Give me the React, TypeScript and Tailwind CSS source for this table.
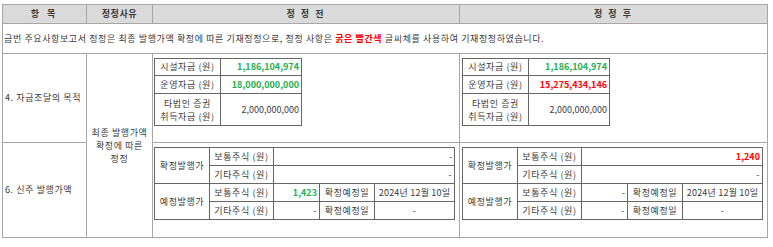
import React from 'react';

const font = { fontFamily: '"Noto Sans CJK KR", "Noto Sans", sans-serif' };

const FundTable: React.FC<{ running: string; runningRed?: boolean }> = ({ running, runningRed }) => (
  <table className="w-[148px] table-fixed border-collapse border border-[#555]">
    <colgroup>
      <col className="w-[66px]" />
      <col />
    </colgroup>
    <tbody>
      <tr className="h-[17px]">
        <td className="border border-[#666] text-center">시설자금 (원)</td>
        <td className="border border-[#666] text-right pr-[2px] tracking-normal font-bold text-[#1fae4f]">1,186,104,974</td>
      </tr>
      <tr className="h-[18px]">
        <td className="border border-[#666] text-center">운영자금 (원)</td>
        <td
          className={`border border-[#666] text-right pr-[2px] tracking-normal font-bold ${runningRed ? 'text-[#ff0000]' : 'text-[#1fae4f]'}`}
        >
          {running}
        </td>
      </tr>
      <tr className="h-[32px]">
        <td className="border border-[#666] text-center leading-[13px]">
          타법인 증권
          <br />
          취득자금 (원)
        </td>
        <td className="border border-[#666] text-right pr-[2px] tracking-normal">2,000,000,000</td>
      </tr>
    </tbody>
  </table>
);

const PriceTable: React.FC<{ after?: boolean }> = ({ after }) => {
  const c = 'border border-[#666]';
  return (
    <table className="w-[301px] table-fixed border-collapse border border-[#555]">
      <colgroup>
        <col className="w-[55px]" />
        <col className="w-[64px]" />
        <col className="w-[46px]" />
        <col className="w-[55px]" />
        <col />
      </colgroup>
      <tbody>
        <tr className="h-[18px]">
          <td rowSpan={2} className={`${c} text-center`}>확정발행가</td>
          <td className={`${c} text-center`}>보통주식 (원)</td>
          <td colSpan={3} className={`${c} text-right pr-[2px] tracking-normal ${after ? 'font-bold text-[#ff0000]' : ''}`}>
            {after ? '1,240' : '-'}
          </td>
        </tr>
        <tr className="h-[18px]">
          <td className={`${c} text-center`}>기타주식 (원)</td>
          <td colSpan={3} className={`${c} text-right pr-[2px]`}>-</td>
        </tr>
        <tr className="h-[18px]">
          <td rowSpan={2} className={`${c} text-center`}>예정발행가</td>
          <td className={`${c} text-center`}>보통주식 (원)</td>
          <td className={`${c} text-right pr-[2px] tracking-normal ${after ? '' : 'font-bold text-[#1fae4f]'}`}>
            {after ? '-' : '1,423'}
          </td>
          <td className={`${c} text-center`}>확정예정일</td>
          <td className={`${c} text-center tracking-[0.2px]`}>2024년 12월 10일</td>
        </tr>
        <tr className="h-[18px]">
          <td className={`${c} text-center`}>기타주식 (원)</td>
          <td className={`${c} text-right pr-[2px]`}>-</td>
          <td className={`${c} text-center`}>확정예정일</td>
          <td className={`${c} text-center`}>-</td>
        </tr>
      </tbody>
    </table>
  );
};

export default function App() {
  const cell = 'border border-[#a6a6a6]';
  return (
    <div className="w-[773px] h-[247px] bg-white pt-[4px] pl-[2px] text-[9px] tracking-[0.6px] text-[#3a3a3a]" style={font}>
      <table className="w-[766px] table-fixed border-collapse border border-[#888]">
        <colgroup>
          <col className="w-[84px]" />
          <col className="w-[66px]" />
          <col className="w-[307px]" />
          <col />
        </colgroup>
        <thead>
          <tr className="h-[19px] bg-[#dadada] font-bold">
            <th className={`${cell} text-center tracking-[3px]`}>항 목</th>
            <th className={`${cell} text-center`}>정정사유</th>
            <th className={`${cell} text-center tracking-[2px]`}>정 정 전</th>
            <th className={`${cell} text-center tracking-[2px]`}>정 정 후</th>
          </tr>
        </thead>
        <tbody>
          <tr className="h-[30px]">
            <td colSpan={4} className={`${cell} pl-[1px]`}>
              금번 주요사항보고서 정정은 최종 발행가액 확정에 따른 기재정정으로, 정정 사항은{' '}
              <span className="font-bold text-[#ff0000]">굵은 빨간색</span> 글씨체를 사용하여 기재정정하였습니다.
            </td>
          </tr>
          <tr className="h-[89px]">
            <td className={`${cell} pl-[2px]`}>4. 자금조달의 목적</td>
            <td rowSpan={2} className={`${cell} text-center leading-[13px]`}>
              최종 발행가액
              <br />
              확정에 따른
              <br />
              정정
            </td>
            <td className={`${cell} align-top pt-[4px] pl-[1px]`}>
              <FundTable running="18,000,000,000" />
            </td>
            <td className={`${cell} align-top pt-[4px] pl-[2px]`}>
              <FundTable running="15,275,434,146" runningRed />
            </td>
          </tr>
          <tr className="h-[95px]">
            <td className={`${cell} pl-[2px]`}>6. 신주 발행가액</td>
            <td className={`${cell} align-top pt-[4px] pl-[1px]`}>
              <PriceTable />
            </td>
            <td className={`${cell} align-top pt-[4px] pl-[2px]`}>
              <PriceTable after />
            </td>
          </tr>
        </tbody>
      </table>
    </div>
  );
}
